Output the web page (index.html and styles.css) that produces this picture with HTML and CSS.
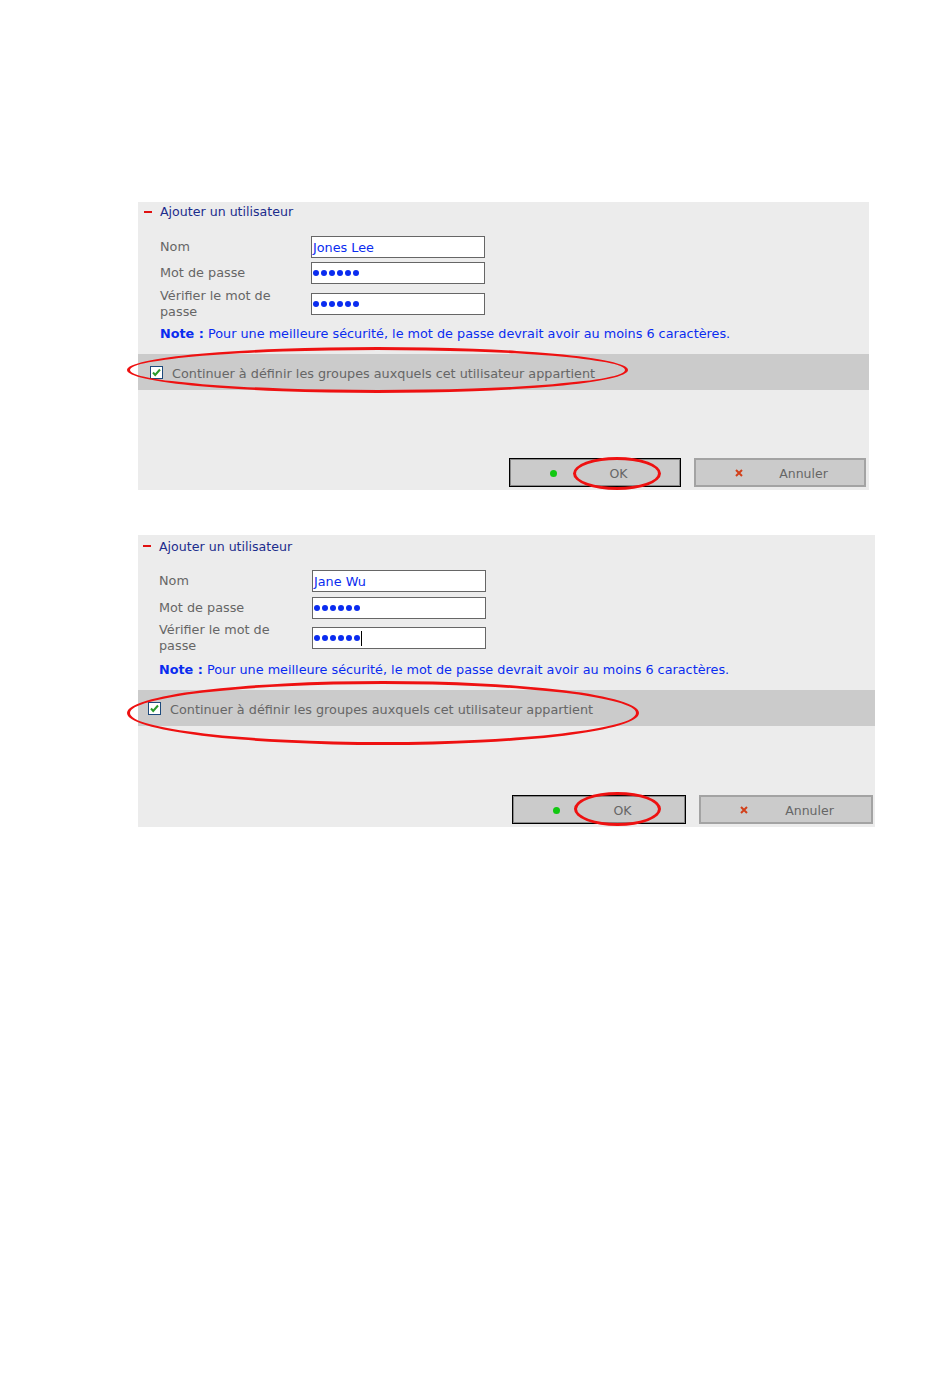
FILE: index.html
```html
<!DOCTYPE html>
<html lang="fr">
  <head>
    <meta charset="UTF-8" />
    <title>Ajouter un utilisateur</title>
    <link rel="stylesheet" href="styles.css">
  </head>
  <body>
    <div class="page">
      <!-- premier ecran -->
      <div class="panneau panneau-1">
        <div class="titre"><span class="tiret"></span>Ajouter un utilisateur</div>

        <div class="ligne ligne-1">
          <label>Nom</label>
          <div class="champ">Jones Lee</div>
        </div>
        <div class="ligne ligne-2">
          <label>Mot de passe</label>
          <div class="champ"><span class="pt"></span><span class="pt"></span><span class="pt"></span><span class="pt"></span><span class="pt"></span><span class="pt"></span></div>
        </div>
        <div class="ligne ligne-3">
          <label>Vérifier le mot de<br />passe</label>
          <div class="champ"><span class="pt"></span><span class="pt"></span><span class="pt"></span><span class="pt"></span><span class="pt"></span><span class="pt"></span></div>
        </div>

        <p class="note"><b>Note :</b> Pour une meilleure sécurité, le mot de passe devrait avoir au moins 6 caractères.</p>

        <div class="bande">
          <svg class="case" width="13" height="13" viewBox="0 0 13 13">
            <rect x="0.5" y="0.5" width="12" height="12" fill="#fff" stroke="#1d4a7c" />
            <path d="M3 6.5 L5.2 9 L10 3.5" fill="none" stroke="#2a9a2a" stroke-width="2" />
          </svg>
          <span>Continuer à définir les groupes auxquels cet utilisateur appartient</span>
        </div>

        <div class="actions">
          <button class="btn btn-ok"><span class="ico-ok"></span><span class="lib">OK</span></button>
          <button class="btn btn-annuler">
            <svg class="ico-x" width="8" height="8" viewBox="0 0 8 8"><path d="M1 1 L7 7 M7 1 L1 7" stroke="#d2401a" stroke-width="2" /></svg>
            <span class="lib">Annuler</span>
          </button>
        </div>

        <div class="cercle cercle-case"></div>
        <div class="cercle cercle-ok"></div>
      </div>

      <!-- deuxieme ecran -->
      <div class="panneau panneau-2">
        <div class="titre"><span class="tiret"></span>Ajouter un utilisateur</div>

        <div class="ligne ligne-1">
          <label>Nom</label>
          <div class="champ">Jane Wu</div>
        </div>
        <div class="ligne ligne-2">
          <label>Mot de passe</label>
          <div class="champ"><span class="pt"></span><span class="pt"></span><span class="pt"></span><span class="pt"></span><span class="pt"></span><span class="pt"></span></div>
        </div>
        <div class="ligne ligne-3">
          <label>Vérifier le mot de<br />passe</label>
          <div class="champ"><span class="pt"></span><span class="pt"></span><span class="pt"></span><span class="pt"></span><span class="pt"></span><span class="pt"></span><span class="curseur"></span></div>
        </div>

        <p class="note"><b>Note :</b> Pour une meilleure sécurité, le mot de passe devrait avoir au moins 6 caractères.</p>

        <div class="bande">
          <svg class="case" width="13" height="13" viewBox="0 0 13 13">
            <rect x="0.5" y="0.5" width="12" height="12" fill="#fff" stroke="#1d4a7c" />
            <path d="M3 6.5 L5.2 9 L10 3.5" fill="none" stroke="#2a9a2a" stroke-width="2" />
          </svg>
          <span>Continuer à définir les groupes auxquels cet utilisateur appartient</span>
        </div>

        <div class="actions">
          <button class="btn btn-ok"><span class="ico-ok"></span><span class="lib">OK</span></button>
          <button class="btn btn-annuler">
            <svg class="ico-x" width="8" height="8" viewBox="0 0 8 8"><path d="M1 1 L7 7 M7 1 L1 7" stroke="#d2401a" stroke-width="2" /></svg>
            <span class="lib">Annuler</span>
          </button>
        </div>

        <div class="cercle cercle-case"></div>
        <div class="cercle cercle-ok"></div>
      </div>
    </div>
  </body>
</html>
```

FILE: styles.css
```css
* {
  margin: 0;
  padding: 0;
  box-sizing: border-box;
}

body {
  background-color: #fff;
  font-family: "DejaVu Sans", sans-serif;
  font-size: 12.8px;
  color: #666;
}

.page {
  padding: 202px 0 0 138px;
}

.panneau {
  position: relative;
  background-color: #ececec;
  width: 731px;
  height: 288px;
  padding-bottom: 3px;
}

.panneau-2 {
  width: 737px;
  height: 292px;
  margin-top: 45px;
}

.titre {
  height: 19px;
  display: flex;
  align-items: center;
  padding-left: 6px;
  color: #1c2d8c;
  font-size: 12.6px;
}

.panneau-2 .titre {
  height: 22px;
  padding-left: 5px;
}

.tiret {
  width: 8px;
  height: 2px;
  background-color: #e01010;
  margin-right: 8px;
}

.ligne {
  display: flex;
  align-items: center;
  padding-left: 22px;
}

.panneau-2 .ligne {
  padding-left: 21px;
}

.ligne label {
  width: 151px;
  line-height: 16px;
}

.panneau-2 .ligne label {
  width: 153px;
}

.ligne-1 {
  height: 22px;
  margin-top: 15px;
}

.ligne-2 {
  height: 22px;
  margin-top: 4px;
}

.ligne-3 {
  height: 32px;
  margin-top: 4px;
}

.panneau-2 .ligne-1 {
  margin-top: 13px;
}

.panneau-2 .ligne-2 {
  margin-top: 5px;
}

.panneau-2 .ligne-3 {
  margin-top: 3px;
}

.champ {
  width: 174px;
  height: 22px;
  background-color: #fff;
  border: 1px solid #666;
  color: #0a2cf0;
  padding-left: 1px;
  display: flex;
  align-items: center;
  gap: 2px;
}

.pt {
  width: 6px;
  height: 6px;
  border-radius: 50%;
  background-color: #0a2cf0;
}

.curseur {
  width: 1px;
  height: 15px;
  background-color: #000;
  margin-left: -1px;
}

.note {
  margin-top: 6px;
  padding-left: 22px;
  line-height: 16px;
  color: #0a2cf0;
}

.panneau-2 .note {
  margin-top: 8px;
  padding-left: 21px;
}

.bande {
  margin-top: 12px;
  height: 36px;
  background-color: #cbcbcb;
  display: flex;
  align-items: center;
  padding: 2px 0 0 12px;
  gap: 9px;
}

.panneau-2 .bande {
  padding-left: 10px;
}

.case {
  flex-shrink: 0;
  margin-top: -2px;
}

.actions {
  display: flex;
  justify-content: flex-end;
  gap: 13px;
  margin-top: 68px;
  padding-right: 3px;
}

.panneau-2 .actions {
  margin-top: 69px;
  padding-right: 2px;
}

.btn {
  width: 172px;
  height: 29px;
  background-color: #cbcbcb;
  font-family: "DejaVu Sans", sans-serif;
  font-size: 12.5px;
  color: #666;
  display: flex;
  align-items: center;
  padding: 1px 0 0 40px;
}

.panneau-2 .btn {
  width: 174px;
}

.btn-ok {
  border: 1px solid #000;
  box-shadow: inset 0 0 0 1px #888;
}

.btn-annuler {
  border: 2px solid #a3a3a3;
  padding-left: 39px;
}

.ico-ok {
  width: 7px;
  height: 7px;
  border-radius: 50%;
  background-color: #12c812;
  flex-shrink: 0;
}

.ico-x {
  flex-shrink: 0;
}

.lib {
  flex: 1;
  text-align: center;
}

/* les ovales rouges dessines par-dessus */
.cercle {
  position: absolute;
  border: 3px solid #ee1111;
  border-radius: 50%;
}

.panneau-1 .cercle-case {
  left: -11px;
  top: 145px;
  width: 501px;
  height: 46px;
}

.panneau-1 .cercle-ok {
  left: 435px;
  top: 255px;
  width: 88px;
  height: 33px;
}

.panneau-2 .cercle-case {
  left: -11px;
  top: 146px;
  width: 512px;
  height: 64px;
}

.panneau-2 .cercle-ok {
  left: 436px;
  top: 257px;
  width: 87px;
  height: 34px;
}
```
